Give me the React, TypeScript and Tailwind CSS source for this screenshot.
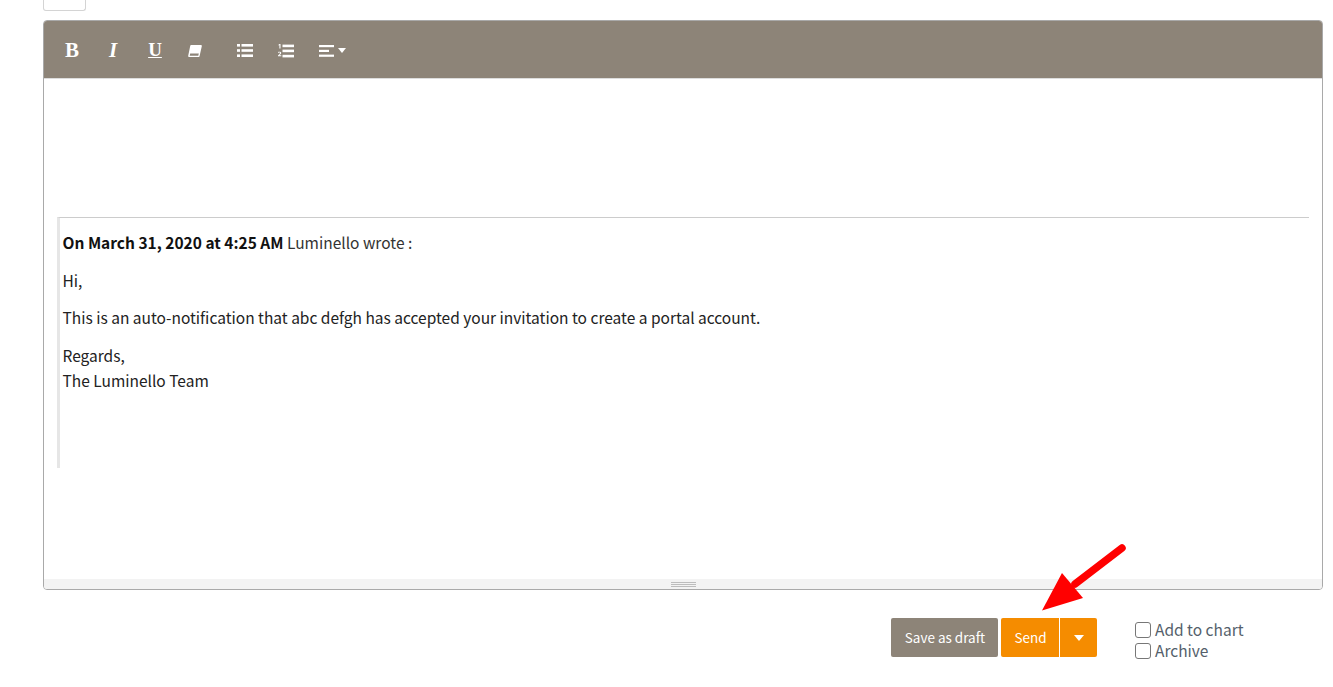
const sans = 'font-["Noto_Sans_CJK_SC","Noto_Sans",sans-serif]';

function ToolButton({ children, className = '' }: { children: React.ReactNode; className?: string }) {
  return <button className={`h-[58px] pt-[2px] flex items-center justify-center text-white ${className}`}>{children}</button>;
}

function ListUl() {
  return (
    <svg width="16" height="13" viewBox="0 0 16 13" fill="#fff">
      <rect x="0" y="0" width="3" height="2.6" />
      <rect x="0" y="5.2" width="3" height="2.6" />
      <rect x="0" y="10.4" width="3" height="2.6" />
      <rect x="4.5" y="0" width="11.5" height="2.6" />
      <rect x="4.5" y="5.2" width="11.5" height="2.6" />
      <rect x="4.5" y="10.4" width="11.5" height="2.6" />
    </svg>
  );
}

function ListOl() {
  return (
    <svg width="16" height="14" viewBox="0 0 16 14" fill="#fff">
      <path d="M1.4 0h1.1v4.6H1.4V1.2L0.5 1.6V.7z" />
      <path d="M0 8.4c.3-.8 2.9-1 3.2.3.2 1-.9 1.7-1.8 2.6h1.9v1H0v-.9c1-1 2-1.8 2-2.5 0-.6-1-.5-1.4 0z" />
      <rect x="4.5" y="0.6" width="11.5" height="2.6" />
      <rect x="4.5" y="5.6" width="11.5" height="2.6" />
      <rect x="4.5" y="10.8" width="11.5" height="2.6" />
    </svg>
  );
}

export default function App() {
  return (
    <div className={`relative w-[1333px] h-[687px] overflow-hidden bg-white ${sans}`}>
      <div className="ml-[43px] w-[43px] h-[11px] border border-t-0 border-[#d4d4d4] rounded-b-[3px] bg-white" />

      <div className="ml-[43px] mt-[9px] w-[1280px] h-[570px] border border-[#a9a9a9] rounded-[4px] flex flex-col overflow-hidden">
        <div className="h-[58px] bg-[#8d8478] flex items-center border-b border-[#ddd]">
          <ToolButton className="w-[18px] ml-[19px] font-['Liberation_Serif',serif] font-bold text-[21px]">B</ToolButton>
          <ToolButton className="w-[18px] ml-[23px] font-['Liberation_Serif',serif] font-bold italic text-[21px]">I</ToolButton>
          <ToolButton className="w-[18px] ml-[24px] font-['Liberation_Serif',serif] font-bold underline text-[19px]">U</ToolButton>
          <ToolButton className="w-[15px] ml-[23px]">
            <svg width="14" height="12" viewBox="0 0 14 12" fill="#fff">
              <path d="M3.2 0h9.6a1 1 0 0 1 1 1.2l-2.2 9.8a1 1 0 0 1-1 1H1.2a1 1 0 0 1-1-1.2L2.2 .9a1 1 0 0 1 1-.9z" />
              <path d="M2.2 8.6h8.6l-.5 2.2H1.7z" fill="#8d8478" />
            </svg>
          </ToolButton>
          <ToolButton className="w-[16px] ml-[35px]"><ListUl /></ToolButton>
          <ToolButton className="w-[16px] ml-[25px]"><ListOl /></ToolButton>
          <ToolButton className="ml-[25px] gap-[4px]">
            <svg width="15" height="12" viewBox="0 0 15 12" fill="#fff">
              <rect x="0" y="0" width="15" height="2.2" />
              <rect x="0" y="4.8" width="10" height="2.2" />
              <rect x="0" y="9.6" width="15" height="2.2" />
            </svg>
            <svg width="8" height="5" viewBox="0 0 8 5" fill="#fff"><path d="M0 0h8L4 5z" /></svg>
          </ToolButton>
        </div>

        <div className="flex-1 bg-white pl-[13px] pr-[13px] pt-[138px]">
          <div className="h-[251px] border-t border-l-[3px] border-t-[#ccc] border-l-[#e6e6e6] pl-[2.5px] pt-[12px] text-[15.5px] leading-[25px] text-[#222]">
            <p><b className="text-[#111]">On March 31, 2020 at 4:25 AM</b> <span className="text-[#333]">Luminello wrote :</span></p>
            <p className="mt-[12.5px]">Hi,</p>
            <p className="mt-[12.5px]">This is an auto-notification that abc defgh has accepted your invitation to create a portal account.</p>
            <p className="mt-[12.5px]">Regards,<br />The Luminello Team</p>
          </div>
        </div>

        <div className="h-[10px] bg-[#f3f3f3] flex flex-col items-center justify-center gap-[1px]">
          <div className="w-[25px] h-[1px] bg-[#bdbdbd]" />
          <div className="w-[25px] h-[1px] bg-[#bdbdbd]" />
          <div className="w-[25px] h-[1px] bg-[#bdbdbd]" />
        </div>
      </div>

      <div className="mt-[28px] ml-[891px] flex items-start">
        <button className="w-[107px] h-[39px] pl-[1px] bg-[#8d8478] rounded-[2px] text-white text-[13.5px]">Save as draft</button>
        <button className="ml-[3px] w-[58px] h-[39px] pl-[1px] bg-[#f58c00] rounded-l-[2px] text-white text-[13.5px]">Send</button>
        <button className="ml-[1px] w-[37px] h-[39px] bg-[#f58c00] rounded-r-[2px] flex items-center justify-center">
          <svg width="10" height="6" viewBox="0 0 10 6" fill="#fff"><path d="M0 0h10L5 6z" /></svg>
        </button>
        <div className="ml-[38px] text-[15.5px] leading-[21px] text-[#555f6b] mt-[1px]">
          <label className="flex items-center"><span className="w-[16px] h-[16px] border border-[#777] rounded-[3px] bg-white mr-[4px]" />Add to chart</label>
          <label className="flex items-center"><span className="w-[16px] h-[16px] border border-[#777] rounded-[3px] bg-white mr-[4px]" />Archive</label>
        </div>
      </div>

      <svg className="absolute left-[1035px] top-[540px]" width="95" height="75" viewBox="0 0 95 75" fill="none">
        <path d="M87 8 L40 44" stroke="#ff0000" strokeWidth="7.5" strokeLinecap="round" />
        <path d="M7 70.5 L27 33 L48 58 Z" fill="#ff0000" />
      </svg>
    </div>
  );
}
